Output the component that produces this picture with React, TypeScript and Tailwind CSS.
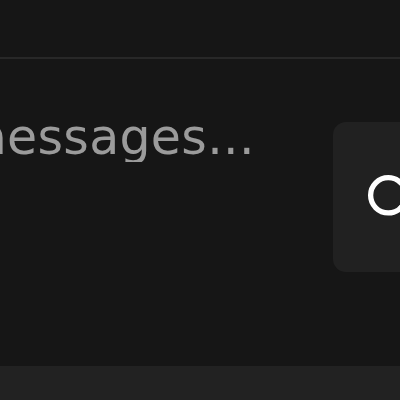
import { Search } from 'lucide-react';

export default function App() {
    return (
        <div className="w-[400px] h-[400px] overflow-hidden bg-[#161616] flex flex-col font-['DejaVu_Sans',sans-serif]">
            <div className="h-[57px] shrink-0" />
            <div className="h-[2px] shrink-0 bg-[#282828]" />

            <div className="flex-1 flex items-start overflow-hidden pt-[54px]">
                <div className="w-[333px] shrink-0 overflow-hidden">
                    <div className="ml-[-41px] whitespace-nowrap text-[49px] leading-[49px] tracking-[0.3px] text-[#9b9b9b]">
                        messages...
                    </div>
                </div>
                <button className="mt-[9px] w-[114px] h-[150px] shrink-0 rounded-[13px] bg-[#212121] flex items-center justify-center text-white">
                    <Search size={53} strokeWidth={2.4} />
                </button>
            </div>

            <div className="h-[34px] shrink-0 bg-[#222222]" />
        </div>
    );
}
